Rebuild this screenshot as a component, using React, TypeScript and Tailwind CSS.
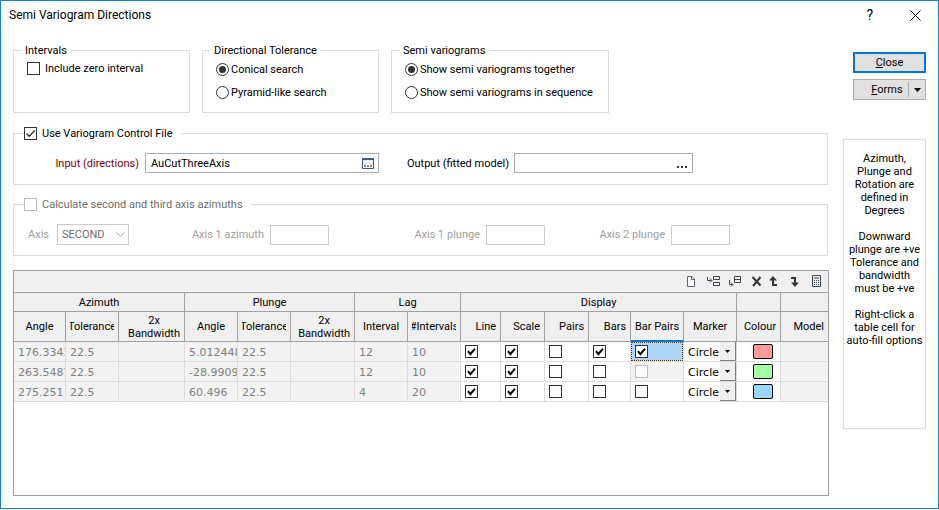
import React from 'react'

type Row = {
  azimuth: string
  azimuthTolerance: string
  plunge: string
  plungeTolerance: string
  interval: string
  intervals: string
  bars: boolean
  barPairs: boolean
  barPairsState?: 'selected' | 'disabled'
  swatch: string
}

const rows: Row[] = [
  {
    azimuth: '176.3343',
    azimuthTolerance: '22.5',
    plunge: '5.012448',
    plungeTolerance: '22.5',
    interval: '12',
    intervals: '10',
    bars: true,
    barPairs: true,
    barPairsState: 'selected',
    swatch: 'bg-[#ff9b9b]',
  },
  {
    azimuth: '263.5487',
    azimuthTolerance: '22.5',
    plunge: '-28.9909',
    plungeTolerance: '22.5',
    interval: '12',
    intervals: '10',
    bars: false,
    barPairs: false,
    barPairsState: 'disabled',
    swatch: 'bg-[#a5ffa5]',
  },
  {
    azimuth: '275.251',
    azimuthTolerance: '22.5',
    plunge: '60.496',
    plungeTolerance: '22.5',
    interval: '4',
    intervals: '20',
    bars: false,
    barPairs: false,
    swatch: 'bg-[#9bd7fa]',
  },
]

const CheckBox: React.FC<{
  id?: string
  label?: string
  checked?: boolean
  disabled?: boolean
  bold?: boolean
}> = ({ id, label, checked, disabled, bold }) => (
  <span className="grid size-[13px] shrink-0">
    <input
      id={id}
      type="checkbox"
      aria-label={label}
      defaultChecked={checked}
      disabled={disabled}
      className="peer col-start-1 row-start-1 size-[13px] appearance-none border border-[#333] bg-white disabled:border-[#bcbcbc]"
    />
    <svg
      viewBox="0 0 13 13"
      fill="none"
      stroke={bold ? '#000' : '#333'}
      strokeWidth={bold ? 2 : 1.3}
      className="pointer-events-none invisible col-start-1 row-start-1 size-[13px] peer-checked:visible"
    >
      <path d={bold ? 'M3 6.2l2.4 3L10 3.6' : 'M2.5 6.5l2.7 2.8L10.8 3.5'} />
    </svg>
  </span>
)

const Radio: React.FC<{ name: string; label: string; checked?: boolean }> = ({
  name,
  label,
  checked,
}) => (
  <label className="flex h-[13px] items-center gap-0.5 whitespace-nowrap">
    <span className="grid size-[13px] shrink-0 place-items-center">
      <input
        type="radio"
        name={name}
        defaultChecked={checked}
        className="peer col-start-1 row-start-1 size-[13px] appearance-none rounded-full border border-[#333] bg-white"
      />
      <span className="pointer-events-none invisible col-start-1 row-start-1 size-[7px] rounded-full bg-[#333] peer-checked:visible" />
    </span>
    {label}
  </label>
)

const Group: React.FC<{ legend: React.ReactNode; className: string; children: React.ReactNode }> = ({
  legend,
  className,
  children,
}) => (
  <fieldset className={`min-w-0 border border-[#dcdcdc] ${className}`}>
    <legend className="h-[13px]">{legend}</legend>
    {children}
  </fieldset>
)

const AxisField: React.FC<{ id: string; label: string; className: string }> = ({
  id,
  label,
  className,
}) => (
  <>
    <label htmlFor={id} className={`shrink-0 text-right ${className}`}>
      {label}
    </label>
    <input id={id} disabled className="ml-1.5 h-5 w-[59px] border border-[#ccc] bg-white" />
  </>
)

const ToolButton: React.FC<{ label: string; className?: string; children: React.ReactNode }> = ({
  label,
  className = '',
  children,
}) => (
  <button type="button" aria-label={label} className={`shrink-0 ${className}`}>
    <svg viewBox="0 0 13 13" fill="none" stroke="#3a434e" className="size-[13px]">
      {children}
    </svg>
  </button>
)

const HeadCell: React.FC<{ children?: React.ReactNode; className?: string }> = ({
  children,
  className = 'justify-center',
}) => (
  <th scope="col" className="border-r border-b border-[#a0a0a0] p-0 font-normal last:border-r-0">
    <div className={`mx-1 flex overflow-hidden whitespace-nowrap ${className}`}>{children}</div>
  </th>
)

const ValueCell: React.FC<{ children?: React.ReactNode }> = ({ children }) => (
  <td className="border-r border-b border-[#dcdcdc] bg-[#f3f3f3] p-0 last:border-r-0">
    <div className="overflow-hidden pt-px pl-1 whitespace-nowrap">{children}</div>
  </td>
)

const CheckCell: React.FC<{ label: string; checked: boolean }> = ({ label, checked }) => (
  <td className="border-r border-b border-[#dcdcdc] p-0 pl-1">
    <CheckBox label={label} checked={checked} bold />
  </td>
)

const Toolbar = () => (
  <div className="flex h-[21px] items-start justify-end border-b border-white bg-[#f0f0f0] pt-1 pr-[5px]">
    <ToolButton label="New row" className="mr-2.5">
      <path d="M3.5 1.500h4.500l2.500 2.500v7.500h-7z" fill="#fff" stroke="#5a6470" />
      <path d="M7.500 1.500v3h3" stroke="#5a6470" />
    </ToolButton>
    <ToolButton label="Insert row above" className="mr-2">
      <path d="M.5 2v3.500h4M3 3.500l2 2-2 2M6.500 1.500h6v3h-6zM6.500 7.500h6v3h-6z" />
    </ToolButton>
    <ToolButton label="Insert row below" className="mr-2">
      <path d="M1.500 5v4.500h3M3 7.500l2 2-2 2M6.500 1.500h6v6h-6zM6.500 4.500h6" />
    </ToolButton>
    <ToolButton label="Delete row" className="mr-1">
      <path d="M3.500 2l8 8.500M11.500 2l-7.500 9" stroke="#333" strokeWidth="2" />
    </ToolButton>
    <ToolButton label="Move up" className="mr-[9px]">
      <path d="M7 4v6h4" stroke="#333" strokeWidth="2" />
      <path d="M7 1l4 4.500H3z" fill="#333" stroke="none" />
    </ToolButton>
    <ToolButton label="Move down" className="mr-[9px]">
      <path d="M3 3h4v6" stroke="#333" strokeWidth="2" />
      <path d="M7 12L3 7.500h8z" fill="#333" stroke="none" />
    </ToolButton>
    <ToolButton label="Calculator">
      <path d="M2.500 .5h8v11h-8zM4 3h5" />
      <path d="M4 5.500h5M4 7.500h5M4 9.500h5" strokeDasharray="1 1" />
    </ToolButton>
  </div>
)

const DirectionsTable = () => (
  <table className="w-full table-fixed border-separate border-spacing-0 border-t border-[#a0a0a0]">
    <colgroup>
      <col className="w-[52px]" />
      <col className="w-[53px]" />
      <col className="w-[66px]" />
      <col className="w-[53px]" />
      <col className="w-[53px]" />
      <col className="w-[64px]" />
      <col className="w-[53px]" />
      <col className="w-[53px]" />
      <col className="w-[40px]" />
      <col className="w-[44px]" />
      <col className="w-[44px]" />
      <col className="w-[42px]" />
      <col className="w-[53px]" />
      <col className="w-[53px]" />
      <col className="w-[44px]" />
      <col />
    </colgroup>
    <thead className="bg-[#f0f0f0]">
      <tr className="h-[19px] *:border-r *:border-b *:border-[#a0a0a0] *:p-0 *:font-normal">
        <th scope="colgroup" colSpan={3}>Azimuth</th>
        <th scope="colgroup" colSpan={3}>Plunge</th>
        <th scope="colgroup" colSpan={2}>Lag</th>
        <th scope="colgroup" colSpan={6}>Display</th>
        <td />
        <td className="border-r-0!" />
      </tr>
      <tr className="h-[30px]">
        <HeadCell>Angle</HeadCell>
        <HeadCell>Tolerance</HeadCell>
        <HeadCell className="justify-end text-center">2x<br />Bandwidth</HeadCell>
        <HeadCell>Angle</HeadCell>
        <HeadCell>Tolerance</HeadCell>
        <HeadCell className="justify-end text-center">2x<br />Bandwidth</HeadCell>
        <HeadCell>Interval</HeadCell>
        <HeadCell>#Intervals</HeadCell>
        <HeadCell className="justify-end">Line</HeadCell>
        <HeadCell className="justify-end">Scale</HeadCell>
        <HeadCell className="justify-end">Pairs</HeadCell>
        <HeadCell className="justify-end">Bars</HeadCell>
        <th scope="col" className="border-r border-b-2 border-r-[#a0a0a0] border-b-[#0078d7] p-0 font-normal">
          Bar Pairs
        </th>
        <HeadCell>Marker</HeadCell>
        <HeadCell className="justify-end">Colour</HeadCell>
        <HeadCell className="justify-end">Model</HeadCell>
      </tr>
    </thead>
    <tbody className="font-['DejaVu_Sans',sans-serif] text-[#808080]">
      {rows.map((row, index) => (
        <tr key={index} className="h-5">
          <ValueCell>{row.azimuth}</ValueCell>
          <ValueCell>{row.azimuthTolerance}</ValueCell>
          <ValueCell />
          <ValueCell>{row.plunge}</ValueCell>
          <ValueCell>{row.plungeTolerance}</ValueCell>
          <ValueCell />
          <ValueCell>{row.interval}</ValueCell>
          <ValueCell>{row.intervals}</ValueCell>
          <CheckCell label="Line" checked />
          <CheckCell label="Scale" checked />
          <CheckCell label="Pairs" checked={false} />
          <CheckCell label="Bars" checked={row.bars} />
          <td className="border-r border-b border-[#dcdcdc] p-0">
            <div
              className={
                row.barPairsState === 'selected'
                  ? 'flex h-[19px] items-center border border-dotted border-[#5a3a10] bg-[#b0d4f8] pl-[3px]'
                  : row.barPairsState === 'disabled'
                    ? 'flex h-[19px] items-center bg-[#f3f3f3] pl-1'
                    : 'flex h-[19px] items-center pl-1'
              }
            >
              <CheckBox
                label="Bar Pairs"
                checked={row.barPairs}
                disabled={row.barPairsState === 'disabled'}
                bold
              />
            </div>
          </td>
          <td className="border-r border-b border-[#dcdcdc] p-0">
            <div className="grid grid-cols-[1fr_16px]">
              <select
                aria-label="Marker"
                className="col-span-2 col-start-1 row-start-1 h-[19px] appearance-none bg-white pt-px pr-[17px] pl-1 text-black"
              >
                <option>Circle</option>
              </select>
              <span className="pointer-events-none col-start-2 row-start-1 grid place-items-center border-r border-b border-[#808080] bg-[#f0f0f0]">
                <svg viewBox="0 0 5 3" className="h-[3px] w-[5px]">
                  <path d="M0 0h5L2.500 3z" />
                </svg>
              </span>
            </div>
          </td>
          <td className="border-r border-b border-[#dcdcdc] p-0">
            <button
              type="button"
              aria-label="Colour"
              className={`ml-4 block h-[15px] w-5 rounded-xs border border-black ${row.swatch}`}
            />
          </td>
          <ValueCell />
        </tr>
      ))}
    </tbody>
  </table>
)

export default function App() {
  return (
    <main className="border border-[#1a7fd6] bg-white px-3 pb-3 font-[Roboto,sans-serif] text-[11px] leading-[13px] text-black">
      <header className="-mx-3 flex h-[43px] items-start pt-1.5 pr-[17px] pl-2">
        <h1 className="flex-1 text-xs leading-[17px]">Semi Variogram Directions</h1>
        <button type="button" aria-label="Help" className="mr-[37px] text-sm leading-[17px]">?</button>
        <button type="button" aria-label="Close window" className="mt-[3px]">
          <svg viewBox="0 0 11 11" fill="none" stroke="#000" className="size-[11px]">
            <path d="M.5.5l10 10M10.500.5l-10 10" />
          </svg>
        </button>
      </header>

      <div className="flex gap-3.5">
        <div className="min-w-0 flex-1">
          <div className="flex gap-3">
            <Group legend={<span className="px-1">Intervals</span>} className="h-[69px] w-[177px] pl-[7px]">
              <div className="mt-[5px] flex h-[13px] items-center gap-[5px] pl-1.5">
                <CheckBox id="zero" />
                <label htmlFor="zero">Include zero interval</label>
              </div>
            </Group>
            <Group legend={<span className="px-1">Directional Tolerance</span>} className="h-[69px] w-[177px] pl-[7px]">
              <div className="mt-1.5 flex flex-col gap-2.5 pl-1.5">
                <Radio name="tolerance" label="Conical search" checked />
                <Radio name="tolerance" label="Pyramid-like search" />
              </div>
            </Group>
            <Group legend={<span className="px-1">Semi variograms</span>} className="h-[69px] w-[218px] pl-[7px]">
              <div className="mt-1.5 flex flex-col gap-2.5 pl-1.5">
                <Radio name="display" label="Show semi variograms together" checked />
                <Radio name="display" label="Show semi variograms in sequence" />
              </div>
            </Group>
          </div>

          <Group
            className="mt-3.5 mr-px pb-[11px] pl-2.5"
            legend={
              <span className="flex gap-[5px] pr-2">
                <CheckBox id="control" checked />
                <label htmlFor="control">Use Variogram Control File</label>
              </span>
            }
          >
            <div className="mt-[13px] flex items-center">
              <label htmlFor="input" className="w-[115px] text-right text-[#800000]">Input (directions)</label>
              <div className="ml-1.5 flex h-5 w-[234px] items-center border border-[#ababb3] pr-1 pl-[5px]">
                <input id="input" defaultValue="AuCutThreeAxis" className="min-w-0 flex-1 outline-none" />
                <button type="button" aria-label="Browse input">
                  <svg viewBox="0 0 12 11" className="h-[11px] w-3">
                    <path d="M.5.5h11v10H.5z" fill="#e8eefa" stroke="#3b5a84" />
                    <path d="M0 0h12v2H0z" fill="#3b5a84" />
                    <path d="M2 7h2v2H2zM5 7h2v2H5zM8 7h2v2H8z" fill="#b08850" />
                  </svg>
                </button>
              </div>
              <label htmlFor="output" className="w-[130px] text-right">Output (fitted model)</label>
              <div className="ml-[5px] flex h-5 w-[179px] items-center border border-[#ababb3] pr-[5px] pl-[5px]">
                <input id="output" className="min-w-0 flex-1 outline-none" />
                <button type="button" aria-label="Browse output" className="pt-2">
                  <svg viewBox="0 0 10 2" className="h-0.5 w-2.5">
                    <path d="M0 0h2v2H0zM4 0h2v2H4zM8 0h2v2H8z" fill="#333" />
                  </svg>
                </button>
              </div>
            </div>
          </Group>

          <Group
            className="mt-[13px] mr-px pb-2.5 pl-2.5"
            legend={
              <span className="flex gap-[5px] pr-2 text-[#6d6d6d]">
                <CheckBox id="axes" disabled />
                <label htmlFor="axes">Calculate second and third axis azimuths</label>
              </span>
            }
          >
            <div className="mt-[13px] flex items-center text-[#a0a0a0]">
              <label htmlFor="axis" className="ml-1 w-[29px]">Axis</label>
              <div className="grid w-[72px]">
                <select
                  id="axis"
                  disabled
                  className="col-start-1 row-start-1 h-[21px] appearance-none border border-[#ccc] bg-white pl-1 text-[#6d6d6d] opacity-100"
                >
                  <option>SECOND</option>
                </select>
                <svg
                  viewBox="0 0 9 5"
                  fill="none"
                  stroke="#aaa"
                  className="pointer-events-none col-start-1 row-start-1 mr-1 h-[5px] w-[9px] self-center justify-self-end"
                >
                  <path d="M.5.5l4 4 4-4" />
                </svg>
              </div>
              <AxisField id="azimuth1" label="Axis 1 azimuth" className="w-[135px]" />
              <AxisField id="plunge1" label="Axis 1 plunge" className="w-[151px]" />
              <AxisField id="plunge2" label="Axis 2 plunge" className="w-[120px]" />
            </div>
          </Group>

          <div className="mt-3.5 min-h-[226px] border border-[#a0a0a0]">
            <Toolbar />
            <DirectionsTable />
          </div>
        </div>

        <aside className="w-[83px] shrink-0 pt-2">
          <div className="flex flex-col gap-1.5 pl-2.5">
            <button type="button" className="h-[21px] border-2 border-[#0078d7] bg-[#e1e1e1]">
              <u>C</u>lose
            </button>
            <button type="button" className="flex h-[21px] items-center border border-[#adadad] bg-[#e1e1e1]">
              <span className="flex-1 pl-3"><u>F</u>orms</span>
              <span className="flex h-[15px] w-[17px] items-center justify-center border-l border-[#adadad]">
                <svg viewBox="0 0 7 4" className="h-1 w-[7px]">
                  <path d="M0 0h7L3.500 4z" />
                </svg>
              </span>
            </button>
          </div>
          <p className="mt-[39px] min-h-[290px] border border-[#dcdcdc] pt-3 text-center whitespace-nowrap">
            Azimuth,<br />
            Plunge and<br />
            Rotation are<br />
            defined in<br />
            Degrees<br />
            <br />
            Downward<br />
            plunge are +ve<br />
            Tolerance and<br />
            bandwidth<br />
            must be +ve<br />
            <br />
            Right-click a<br />
            table cell for<br />
            auto-fill options
          </p>
        </aside>
      </div>
    </main>
  )
}
